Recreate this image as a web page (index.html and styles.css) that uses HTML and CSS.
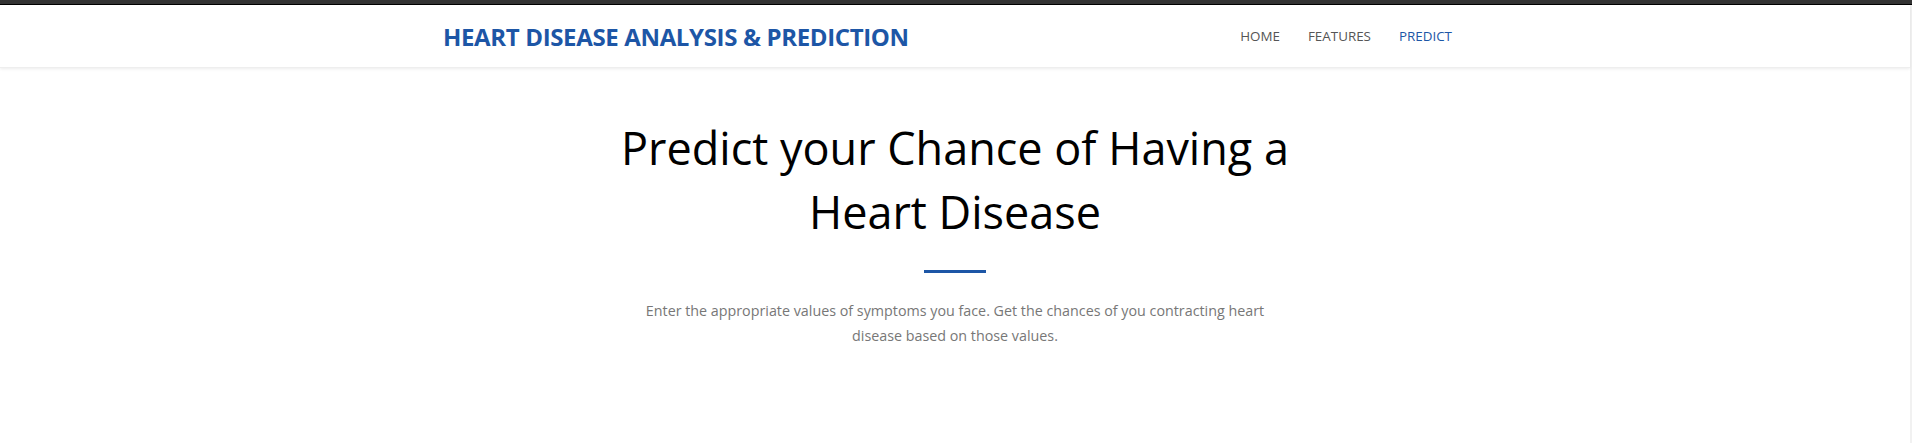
FILE: index.html
```html
<!DOCTYPE html>
<html>
<head>
<meta charset="utf-8">
<link rel="stylesheet" href="styles.css">
</head>
<body>
<div class="topbar"></div>
<div class="page">
  <header class="navbar">
    <div class="container nav-inner">
      <a class="brand" href="#">HEART DISEASE ANALYSIS &amp; PREDICTION</a>
      <nav class="nav">
        <a class="nav-link" href="#">HOME</a>
        <a class="nav-link" href="#">FEATURES</a>
        <a class="nav-link active" href="#">PREDICT</a>
      </nav>
    </div>
  </header>
  <section class="hero">
    <h1 class="title">Predict your Chance of Having a Heart Disease</h1>
    <div class="divider"></div>
    <p class="lead">Enter the appropriate values of symptoms you face. Get the chances of you contracting heart disease based on those values.</p>
  </section>
</div>
</body>
</html>
```

FILE: styles.css
```css
* { box-sizing: border-box; }
html, body { margin: 0; padding: 0; }
body {
  font-family: "Open Sans", "Noto Sans", sans-serif;
  background: #f1f1f1;
  height: 100vh;
  display: flex;
  flex-direction: column;
  overflow: hidden;
}
.topbar {
  height: 5px;
  background: #333333;
  border-bottom: 1px solid #000;
  flex: none;
}
.page {
  flex: 1;
  margin-right: 2px;
  background: #fff;
}
.navbar {
  height: 63px;
  background: #fff;
  box-shadow: 0 1px 3px rgba(0,0,0,0.08);
  border-bottom: 1px solid #eeeeee;
}
.container {
  width: 1024px;
  margin: 0 auto;
}
.nav-inner {
  height: 100%;
  display: flex;
  align-items: center;
  justify-content: space-between;
}
.brand {
  font-weight: 700;
  font-size: 24px;
  letter-spacing: -0.35px;
  color: #1d56a6;
  text-decoration: none;
}
.nav { display: flex; }
.nav-link {
  font-size: 13.4px;
  color: #555;
  text-decoration: none;
  padding: 0 14px;
}
.nav-link:last-child { padding-right: 15px; }
.nav-link.active { color: #1d56a6; }
.hero {
  text-align: center;
  padding-top: 48px;
}
.title {
  margin: 0 auto;
  max-width: 700px;
  font-weight: 400;
  font-size: 45px;
  line-height: 64px;
  color: #000;
}
.divider {
  width: 62px;
  height: 3px;
  background: #1d56a6;
  margin: 26px auto 0;
}
.lead {
  margin: 26px auto 0;
  max-width: 640px;
  font-size: 14.3px;
  line-height: 24.5px;
  color: #777;
}
```
